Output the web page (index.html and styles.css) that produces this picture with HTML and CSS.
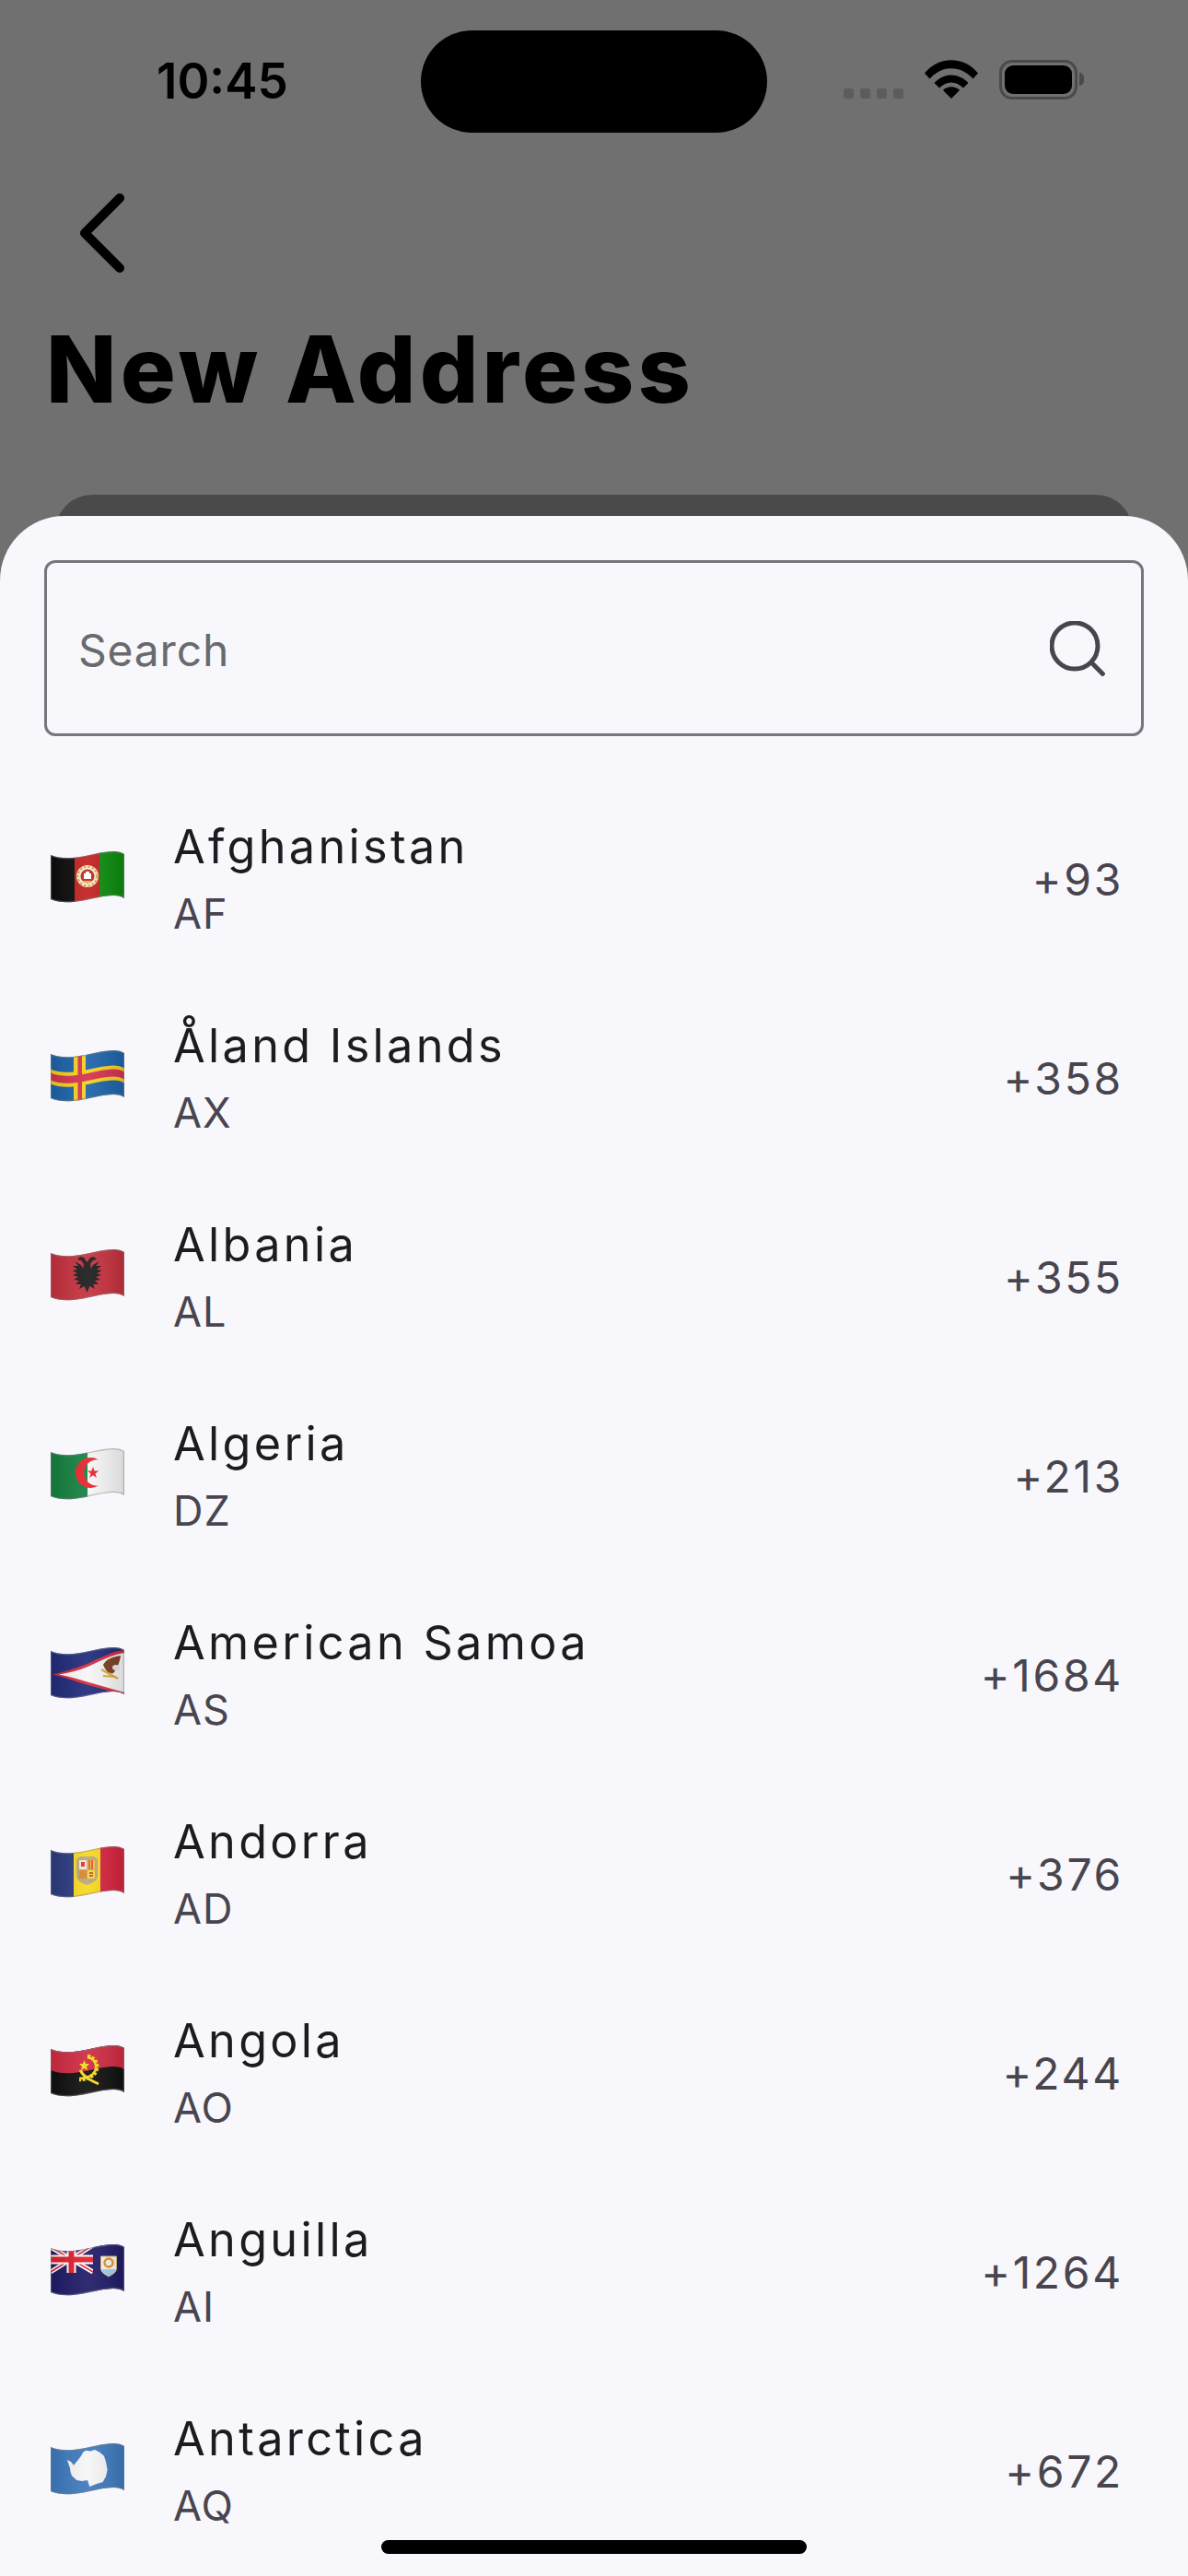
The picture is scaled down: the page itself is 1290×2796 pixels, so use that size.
FILE: index.html
```html
<!DOCTYPE html>
<html lang="en">
<head>
<meta charset="utf-8">
<title>New Address</title>
<link rel="stylesheet" href="styles.css">
</head>
<body>
<svg class="defs" width="0" height="0" aria-hidden="true">
  <defs>
    <path id="wave-path" d="M0 5C9 9 20 9 32 7S58 1 68 1C73 1 77 2 80 4V52C77 50 73 49 68 49C58 49 44 53 32 55S9 57 0 53Z"/>
    <clipPath id="wave"><use href="#wave-path"/></clipPath>
    <linearGradient id="sheen" x1="0" x2="1" y1="0" y2="0">
      <stop offset="0" stop-color="#000" stop-opacity=".1"/>
      <stop offset=".5" stop-color="#fff" stop-opacity=".08"/>
      <stop offset="1" stop-color="#000" stop-opacity=".12"/>
    </linearGradient>
    <g id="finish">
      <rect width="80" height="58" fill="url(#sheen)"/>
      <use href="#wave-path" fill="none" stroke="#808080" stroke-opacity=".45" stroke-width="2.5"/>
    </g>
  </defs>
</svg>
<div class="screen">
  <div class="status">
    <span class="time">10:45</span>
    <div class="island"></div>
    <div class="status-icons">
      <div class="signal"><i></i><i></i><i></i><i></i></div>
      <svg class="wifi" viewBox="0 0 58 42"><path d="M0 14.5C15 -4.5 43 -4.5 58 14.5L52.5 20.5C39 5.5 19 5.5 5.5 20.5Z"/><path d="M10.5 25C21 13.5 37 13.5 47.5 25L42 30.5C34 22.5 24 22.5 16 30.5Z"/><path d="M20 33C25 28 33 28 38 33L29 42Z"/></svg>
      <div class="battery"><div class="battery-fill"></div></div>
      <div class="battery-cap"></div>
    </div>
  </div>
  <svg class="back" viewBox="0 0 52 86"><path d="M44 5L6 43L44 81"/></svg>
  <h1 class="title">New Address</h1>
  <div class="behind"></div>
  <div class="sheet">
    <div class="search">
      <span class="search-hint">Search</span>
      <svg class="search-icon" viewBox="0 0 60 60"><circle cx="27" cy="27" r="25"/><path d="M44 44L59 59"/></svg>
    </div>
    <ul class="list">
      <li class="row">
        <svg class="flag" viewBox="0 0 80 58"><g clip-path="url(#wave)"><rect width="27" height="58" fill="#0b0b0b"/><rect x="26" width="28" height="58" fill="#c11f20"/><rect x="53" width="27" height="58" fill="#0b8a0c"/><circle cx="40" cy="28" r="12" fill="#f4ead2"/><circle cx="40" cy="28" r="10.5" fill="none" stroke="#d59a2c" stroke-width="2" stroke-dasharray="2.5 2"/><circle cx="40" cy="28" r="7.5" fill="#b92a1e"/><path d="M36 31V25H38V23H42V25H44V31Z" fill="#fff"/><path d="M35 33H45V35H35Z" fill="#e2b04a"/><use href="#finish"/></g></svg>
        <div class="names"><div class="name">Afghanistan</div><div class="code">AF</div></div>
        <div class="dial">+93</div>
      </li>
      <li class="row">
        <svg class="flag" viewBox="0 0 80 58"><g clip-path="url(#wave)"><rect width="80" height="58" fill="#1c62a8"/><path d="M25 0H38V58H25Z" fill="#f8cf1b"/><path d="M0 21.5C9 25.5 20 25.5 32 23.5S58 17.5 68 17.5C73 17.5 77 18.5 80 20.5V36.5C77 34.5 73 33.5 68 33.5C58 33.5 44 37.5 32 39.5S9 41.5 0 37.5Z" fill="#f8cf1b"/><path d="M29.5 0H34V58H29.5Z" fill="#d3324f"/><path d="M0 25.5C9 29.5 20 29.5 32 27.5S58 21.5 68 21.5C73 21.5 77 22.5 80 24.5V32.5C77 30.5 73 29.5 68 29.5C58 29.5 44 33.5 32 35.5S9 37.5 0 33.5Z" fill="#d3324f"/><use href="#finish"/></g></svg>
        <div class="names"><div class="name">Åland Islands</div><div class="code">AX</div></div>
        <div class="dial">+358</div>
      </li>
      <li class="row">
        <svg class="flag" viewBox="0 0 80 58"><g clip-path="url(#wave)"><rect width="80" height="58" fill="#c4303c"/><path d="M39.5 48L36.5 41L31 44L33 39L27 39L31 35L25 34L30 31L24 29L29 27L23.5 24L29 23L24 19L30 19L26 14L33 18L35 22L36 17L33 13L29 12L32 9L36 10L39.5 15L43 10L47 9L50 12L46 13L43 17L44 22L46 18L53 14L49 19L55 19L50 23L55.5 24L50 27L55 29L49 31L54 34L48 35L52 39L46 39L48 44L42.5 41Z" fill="#1b1b1b"/><use href="#finish"/></g></svg>
        <div class="names"><div class="name">Albania</div><div class="code">AL</div></div>
        <div class="dial">+355</div>
      </li>
      <li class="row">
        <svg class="flag" viewBox="0 0 80 58"><g clip-path="url(#wave)"><rect width="41" height="58" fill="#14803f"/><rect x="40" width="40" height="58" fill="#f5f5f5"/><path d="M52 13.4A16.5 16.5 0 1 0 52 41.6A14.2 14.2 0 1 1 52 13.4Z" fill="#e8222c"/><path d="M46 21L47.6 25.5L52.2 25.5L48.5 28.4L49.9 33L46 30.3L42.1 33L43.5 28.4L39.8 25.5L44.4 25.5Z" fill="#e8222c"/><use href="#finish"/></g></svg>
        <div class="names"><div class="name">Algeria</div><div class="code">DZ</div></div>
        <div class="dial">+213</div>
      </li>
      <li class="row">
        <svg class="flag" viewBox="0 0 80 58"><g clip-path="url(#wave)"><rect width="80" height="58" fill="#1f2a7a"/><path d="M2 30.5C14 28 26 24 37 20C52 14 66 5 80 4V53C66 49 52 45 37 41C26 38 14 33 2 30.5Z" fill="#d62a3c"/><path d="M9 30.5C20 29 30 26 38 23C52 17 66 9 80 7V50C66 46 52 42 38 38C28 35 18 32 9 30.5Z" fill="#f6f6f6"/><path d="M57 20C60 14 67 11 76 10C75 17 72 25 68 29C63 30 60 27 57 20Z" fill="#7a3f22"/><ellipse cx="71" cy="23" rx="4" ry="3" fill="#e8e8e8"/><path d="M55 25L73 35" stroke="#d9ab33" stroke-width="2.5"/><path d="M57 32L70 33" stroke="#d9ab33" stroke-width="2"/><use href="#finish"/></g></svg>
        <div class="names"><div class="name">American Samoa</div><div class="code">AS</div></div>
        <div class="dial">+1684</div>
      </li>
      <li class="row">
        <svg class="flag" viewBox="0 0 80 58"><g clip-path="url(#wave)"><rect width="26" height="58" fill="#2b3a80"/><rect x="25" width="30" height="58" fill="#f7d81e"/><rect x="54" width="26" height="58" fill="#d4233c"/><path d="M28 15L32 12H47L51 15V33C51 39 44 41 39.5 43C35 41 28 39 28 33Z" fill="#b9a67a"/><rect x="31" y="16" width="8" height="10" fill="#eee8da"/><rect x="33" y="18" width="4" height="5" fill="#d33"/><rect x="40" y="16" width="8" height="10" fill="#f0c43a"/><path d="M42 16V26M45 16V26" stroke="#d33" stroke-width="1.5"/><rect x="31" y="27" width="8" height="9" fill="#d9852a"/><rect x="40" y="27" width="8" height="9" fill="#f3d642"/><path d="M42 30H46M42 33H46" stroke="#c22" stroke-width="1.5"/><use href="#finish"/></g></svg>
        <div class="names"><div class="name">Andorra</div><div class="code">AD</div></div>
        <div class="dial">+376</div>
      </li>
      <li class="row">
        <svg class="flag" viewBox="0 0 80 58"><g clip-path="url(#wave)"><rect width="80" height="58" fill="#0f0f0f"/><path d="M0 0H80V27C77 25 73 24 68 24C58 24 44 28 32 30S9 32 0 28Z" fill="#cf2a40"/><path d="M40 13C49 14 53 24 48 31C44 36 37 38 31 38" fill="none" stroke="#f4d81f" stroke-width="4.5" stroke-dasharray="3 1.5"/><path d="M40 14C48 15 52 24 47 31C44 35 37 37 32 37" fill="none" stroke="#f4d81f" stroke-width="2.5"/><path d="M32 28C36 36 44 39 52 43" fill="none" stroke="#f4d81f" stroke-width="3"/><path d="M36.5 17L38 21L42 21L39 24L40 28L36.5 26L33 28L34 24L31 21L35 21Z" fill="#f4d81f"/><use href="#finish"/></g></svg>
        <div class="names"><div class="name">Angola</div><div class="code">AO</div></div>
        <div class="dial">+244</div>
      </li>
      <li class="row">
        <svg class="flag" viewBox="0 0 80 58"><g clip-path="url(#wave)"><rect width="80" height="58" fill="#1f1a66"/><path d="M0 4L46 31M46 2L0 31" stroke="#fff" stroke-width="5"/><path d="M0 4L46 31M46 2L0 31" stroke="#e01f2e" stroke-width="1.5"/><path d="M22.5 0V32M0 17.5H46" stroke="#fff" stroke-width="10"/><path d="M22.5 0V32M0 17.5H46" stroke="#e01f2e" stroke-width="6"/><rect x="46" width="34" height="58" fill="#1f1a66"/><path d="M54.5 14H71.5V27C71.5 32 66 34 63 36C60 34 54.5 32 54.5 27Z" fill="#f7f7f2" stroke="#c9b77a"/><path d="M55 28H71C70 32 66 34 63 36C60 34 56 32 55 28Z" fill="#a8cfe8"/><circle cx="63" cy="21" r="4.5" fill="none" stroke="#e8912a" stroke-width="2.5"/><use href="#finish"/></g></svg>
        <div class="names"><div class="name">Anguilla</div><div class="code">AI</div></div>
        <div class="dial">+1264</div>
      </li>
      <li class="row">
        <svg class="flag" viewBox="0 0 80 58"><g clip-path="url(#wave)"><rect width="80" height="58" fill="#3d79bd"/><path d="M17.7 18.7L22 21L25 24.7L29 20L33 14.7L35 11L38 8.7L43 9.5L48 8L53 10.5L58 14.7L60 21L61.7 29.7L60 37L56.7 43L50 45L42.3 48L41 44L40 41L34 42L28.3 41L23 36.3L21.5 32L21 28L19 22Z" fill="#f6f6f6"/><use href="#finish"/></g></svg>
        <div class="names"><div class="name">Antarctica</div><div class="code">AQ</div></div>
        <div class="dial">+672</div>
      </li>
    </ul>
    <div class="home"></div>
  </div>
</div>
</body>
</html>
```
FILE: styles.css
```css
* { box-sizing: border-box; }
html, body { margin: 0; padding: 0; }
body { width: 1290px; height: 2796px; overflow: hidden; font-family: Inter, "Liberation Sans", sans-serif; background: #707070; }
.defs { position: absolute; }
.screen { position: relative; width: 1290px; height: 2796px; overflow: hidden; background: #707070; }
.status { position: relative; height: 178px; }
.time { position: absolute; left: 170px; top: 58px; font: 600 53px/60px Inter, sans-serif; color: #000; }
.island { position: absolute; left: 457px; top: 33px; width: 376px; height: 111px; border-radius: 56px; background: #000; }
.status-icons { position: absolute; left: 916px; top: 65px; width: 262px; height: 44px; }
.signal { position: absolute; left: 0; top: 31px; display: flex; gap: 7px; }
.signal i { width: 11px; height: 11px; border-radius: 3px; background: #5c5c5c; }
.wifi { position: absolute; left: 88px; top: 0; width: 58px; height: 42px; fill: #000; }
.battery { position: absolute; left: 169px; top: 0; width: 85px; height: 43px; border: 3.5px solid #4a4a4a; border-radius: 14px; padding: 3px; }
.battery-fill { width: 100%; height: 100%; border-radius: 9px; background: #000; }
.battery-cap { position: absolute; left: 256px; top: 14px; width: 5px; height: 14px; border-radius: 0 5px 5px 0; background: #4a4a4a; }
.back { display: block; margin-left: 86px; margin-top: 32px; width: 52px; height: 86px; fill: none; stroke: #000; stroke-width: 10px; stroke-linecap: round; stroke-linejoin: round; }
.title { margin: 47px 0 0 50px; font: 800 100px/116px Inter, sans-serif; color: #000; letter-spacing: 4.1px; }
.behind { position: absolute; left: 60px; top: 537px; width: 1170px; height: 60px; border-radius: 40px 40px 0 0; background: #4a4a4a; }
.sheet { position: absolute; left: 0; top: 560px; width: 1290px; height: 2236px; border-radius: 70px 70px 0 0; background: #f7f7fc; padding: 48px 48px 0; overflow: hidden; }
.search { display: flex; align-items: center; justify-content: space-between; height: 191px; border: 3px solid #79747e; border-radius: 12px; padding: 4px 39px 0 34px; }
.search-hint { font-size: 48px; letter-spacing: 0.8px; color: #6a6a6c; }
.search-icon { width: 60px; height: 60px; margin-top: -4px; fill: none; stroke: #49454f; stroke-width: 5px; }
.list { list-style: none; margin: 42px -48px 0; padding: 0; }
.row { display: flex; align-items: center; height: 216px; padding: 0 70px 0 55px; }
.flag { width: 80px; height: 58px; flex: none; margin-top: 5px; }
.names { flex: 1; margin-left: 53px; padding-top: 7px; }
.name { font-size: 50.4px; line-height: 72px; letter-spacing: 3.3px; color: #1c1b1f; }
.code { margin-top: 7px; font-size: 45px; line-height: 60px; letter-spacing: 1px; color: #49454f; }
.dial { margin-top: 10px; font-size: 48px; letter-spacing: 2.7px; color: #49454f; }
.home { position: absolute; left: 414px; bottom: 24px; width: 462px; height: 15px; border-radius: 8px; background: #000; }
```
